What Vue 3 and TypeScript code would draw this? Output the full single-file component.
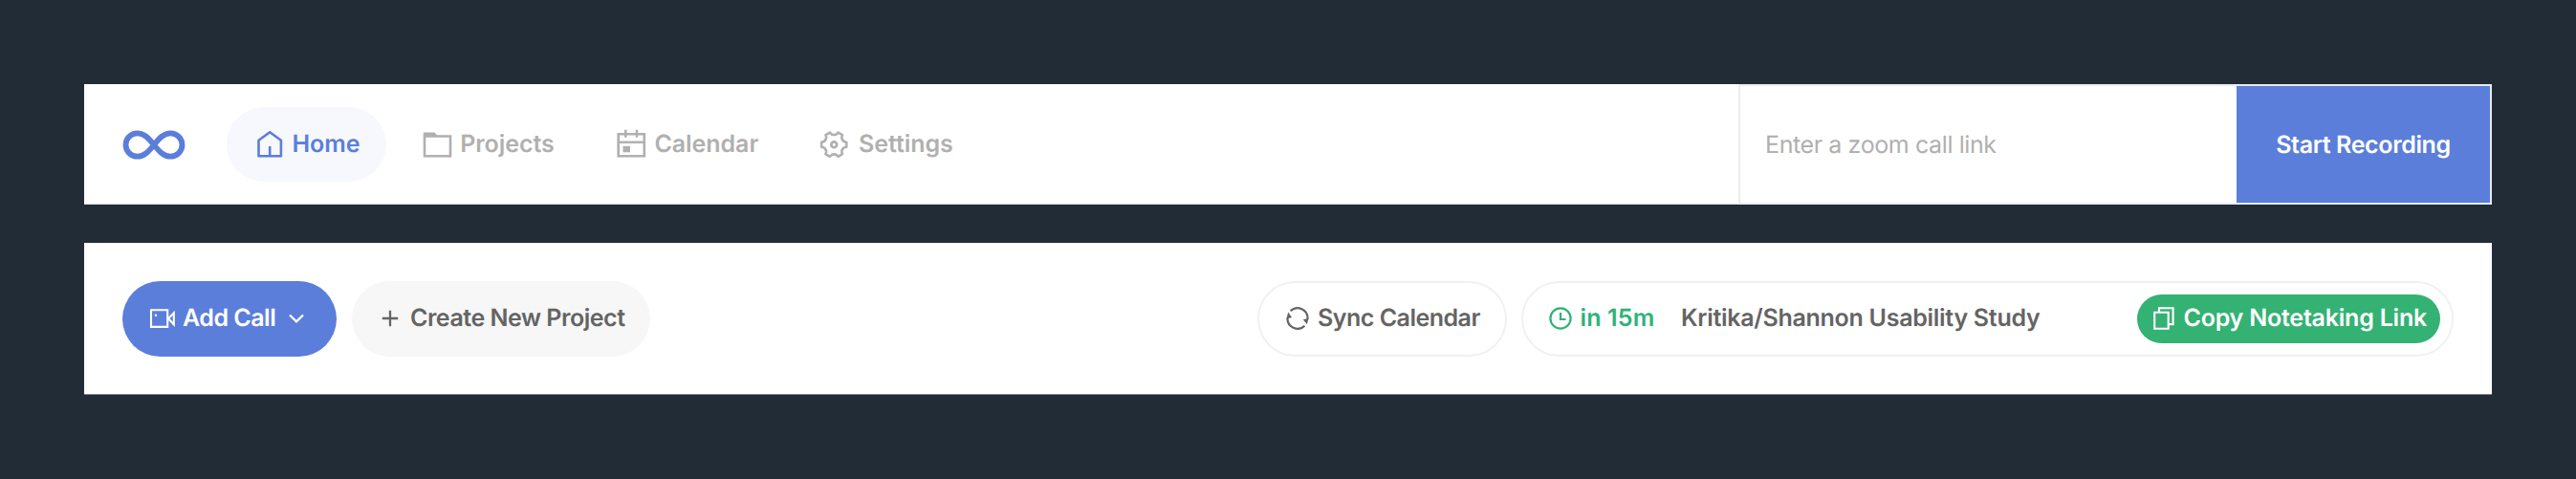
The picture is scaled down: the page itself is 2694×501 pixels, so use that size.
<script setup lang="ts">
interface NavItem {
  label: string
  icon: string
  active?: boolean
}

const navItems: NavItem[] = [
  { label: 'Home', icon: 'home', active: true },
  { label: 'Projects', icon: 'folder' },
  { label: 'Calendar', icon: 'calendar' },
  { label: 'Settings', icon: 'gear' },
]

const polar = (cx: number, cy: number, radius: number, degrees: number): string => {
  const angle = (degrees * Math.PI) / 180
  return `${(cx + radius * Math.cos(angle)).toFixed(2)} ${(cy + radius * Math.sin(angle)).toFixed(2)}`
}

// Six flat teeth joined by curved valleys.
const gearPath = (cx: number, cy: number): string => {
  let d = ''
  for (let tooth = 0; tooth < 6; tooth++) {
    const at = tooth * 60
    d += `${tooth ? 'L' : 'M'}${polar(cx, cy, 13.3, at - 11)}L${polar(cx, cy, 13.3, at + 11)}`
    d += `C${polar(cx, cy, 10.2, at + 18)} ${polar(cx, cy, 9.8, at + 24)} ${polar(cx, cy, 10.4, at + 30)}`
    d += `C${polar(cx, cy, 9.8, at + 36)} ${polar(cx, cy, 10.2, at + 42)} ${polar(cx, cy, 13.3, at + 49)}`
  }
  return d + 'Z'
}
</script>

<template>
  <main class="page">
    <header class="bar topbar">
      <svg class="logo" width="66" height="32" viewBox="0 0 66 32" fill="none" stroke="currentColor" stroke-width="5.8">
        <path d="M33 16.500C27 9 22.500 4.300 15.700 4.300A12.200 12.200 0 0 0 15.700 28.700C22.500 28.700 27 24 33 16.500S43.500 4.300 50.300 4.300A12.200 12.200 0 0 1 50.300 28.700C43.500 28.700 39 24 33 16.500Z" />
      </svg>

      <nav class="nav">
        <a v-for="item in navItems" :key="item.label" class="nav-item" :class="{ active: item.active }">
          <svg class="nav-icon" width="32" height="32" viewBox="0 0 32 32" fill="none" stroke="currentColor" stroke-width="2.6">
            <template v-if="item.icon === 'home'">
              <path d="M5.500 11.800L17.200 3.300L28.900 11.800V28.200H5.500Z" stroke-linejoin="round" />
              <path d="M17.200 28V18" />
            </template>
            <template v-else-if="item.icon === 'folder'">
              <path d="M3 7.500H30V28.200H3Z" />
              <path d="M1.800 3.600H13.500L17 7.500H1.800Z" fill="currentColor" stroke="none" />
            </template>
            <template v-else-if="item.icon === 'calendar'">
              <path d="M2.700 5.200H29.800V28.200H2.700ZM2.700 13.700H29.800M10.300 .800V8.700M22 .800V8.700" />
              <path d="M7.500 17.800H15V24.300H7.500Z" fill="currentColor" stroke="none" />
            </template>
            <template v-else>
              <path :d="gearPath(15.2, 16.2)" stroke-linejoin="round" />
              <circle cx="15.200" cy="16.200" r="2.900" stroke-width="2.800" />
            </template>
          </svg>
          <span class="nav-label">{{ item.label }}</span>
        </a>
      </nav>

      <form class="recorder" @submit.prevent>
        <input class="call-input" type="text" placeholder="Enter a zoom call link" />
        <button class="record-button" type="submit">Start Recording</button>
      </form>
    </header>

    <section class="bar toolbar">
      <button class="pill add-call">
        <svg width="28" height="24" viewBox="0 0 28 24" fill="none" stroke="currentColor" stroke-width="2.100">
          <path d="M2 3.300H19.200V20.900H2ZM20 12.300L25.800 6.300V18.300Z" />
          <circle cx="7" cy="8.700" r="1.200" fill="currentColor" stroke="none" />
        </svg>
        <span class="add-label">Add Call</span>
        <svg width="18" height="12" viewBox="0 0 18 12" fill="none" stroke="currentColor" stroke-width="2.300">
          <path d="M2 2.500L9 9.300L16 2.500" />
        </svg>
      </button>
      <button class="pill create">
        <svg width="18" height="18" viewBox="0 0 18 18" fill="none" stroke="currentColor" stroke-width="2.300">
          <path d="M9 .800V17.200M.800 9H17.200" />
        </svg>
        <span>Create New Project</span>
      </button>

      <button class="pill outlined sync">
        <svg width="26" height="26" viewBox="0 0 26 26" fill="none" stroke="currentColor" stroke-width="2.200">
          <path d="M5.600 5.300A10.500 10.500 0 0 1 23.500 13.500M20.400 20.700A10.500 10.500 0 0 1 2.500 12.500" />
          <path d="M3.200 6.500L7 12L1.400 13.500ZM24.700 12.800L22.800 19.300L18.800 14.200Z" fill="currentColor" stroke="none" />
        </svg>
        <span>Sync Calendar</span>
      </button>

      <article class="pill outlined event">
        <svg class="clock" width="26" height="26" viewBox="0 0 26 26" fill="none" stroke="currentColor" stroke-width="2.200">
          <circle cx="13" cy="13" r="10.600" />
          <path d="M13 7V14H18.500" />
        </svg>
        <span class="countdown">in 15m</span>
        <span class="event-title">Kritika/Shannon Usability Study</span>
        <button class="copy-button">
          <svg width="24" height="26" viewBox="0 0 24 26" fill="none" stroke="currentColor" stroke-width="2.100">
            <path d="M2.200 6.700H16.700V23.700H2.200ZM7 6.700V2.300H21.600V19.100H16.700" />
          </svg>
          <span>Copy Notetaking Link</span>
        </button>
      </article>
    </section>
  </main>
</template>

<style>
body {
  margin: 0;
  background: #222c36;
}
</style>

<style scoped>
.page {
  box-sizing: border-box;
  width: 2694px;
  height: 501px;
  padding: 88px;
  background: #222c36;
  color: #646464;
  font: 600 25px/32px Inter, 'Liberation Sans', sans-serif;
  text-rendering: geometricPrecision;
  display: flex;
  flex-direction: column;
  gap: 40px;
}

.page * {
  box-sizing: border-box;
}

button {
  border: 0;
  font: inherit;
  text-rendering: inherit;
  white-space: nowrap;
}

svg {
  flex: none;
}

.bar {
  width: 2518px;
  display: flex;
  align-items: center;
  background: #fff;
}

.topbar {
  height: 126px;
  padding-left: 40px;
  border-bottom: 1px solid #d9dbde;
}

.logo {
  color: #5b7edb;
}

.nav {
  display: flex;
  gap: 8.5px;
  margin-left: 43px;
}

.nav-item {
  display: flex;
  align-items: center;
  gap: 8.5px;
  height: 78px;
  padding: 0 27.7px 0 28px;
  border-radius: 39px;
  color: #b0b0b0;
}

.nav-label {
  padding-top: 1px;
  letter-spacing: -0.05px;
}

.nav-item.active {
  color: #5b7edb;
  background: #f6f8fd;
}

.recorder {
  display: flex;
  align-self: stretch;
  height: 126px;
  width: 788px;
  margin-left: auto;
  border: 2px solid #e9ecf0;
}

.call-input {
  flex: 1;
  min-width: 0;
  padding: 1px 26px 0;
  border: 0;
  outline: 0;
  background: #fff;
  font: 400 25px/32px Inter, 'Liberation Sans', sans-serif;
  letter-spacing: -0.4px;
  text-rendering: inherit;
}

.call-input::placeholder {
  color: #b0b0b0;
  opacity: 1;
}

.record-button {
  width: 265px;
  padding: 1px 0 0;
  background: #5b7edb;
  color: #fff;
  letter-spacing: -0.36px;
}

.toolbar {
  height: 159px;
  padding: 0 40px;
  border-bottom: 1px solid #83878d;
}

.pill {
  display: flex;
  align-items: center;
  height: 79px;
  padding: 0;
  border-radius: 40px;
}

.add-call {
  width: 224px;
  padding-left: 28px;
  background: #5b7edb;
  color: #fff;
}

.add-label {
  width: 110px;
  margin-left: 7px;
  text-align: left;
  letter-spacing: -0.5px;
}

.create {
  width: 312px;
  margin-left: 16px;
  padding-left: 31px;
  gap: 12px;
  background: #f7f7f7;
  color: #646464;
  letter-spacing: -0.47px;
}

.outlined {
  border: 2px solid #f1f1f2;
  background: #fff;
  color: #646464;
}

.sync {
  width: 261px;
  margin-left: auto;
  padding-left: 27px;
  gap: 8px;
  letter-spacing: -0.5px;
}

.event {
  width: 975px;
  margin-left: 15px;
  padding: 0 12px 0 26px;
}

.clock,
.countdown {
  color: #2fb277;
}

.countdown {
  margin-left: 7.5px;
  width: 105.5px;
  letter-spacing: 0.15px;
}

.event-title {
  letter-spacing: -0.28px;
}

.copy-button {
  display: flex;
  align-items: center;
  width: 317px;
  height: 51px;
  margin-left: auto;
  padding: 0 0 0 16px;
  gap: 8.5px;
  border-radius: 26px;
  background: #33b274;
  color: #fff;
  letter-spacing: -0.22px;
}
</style>
